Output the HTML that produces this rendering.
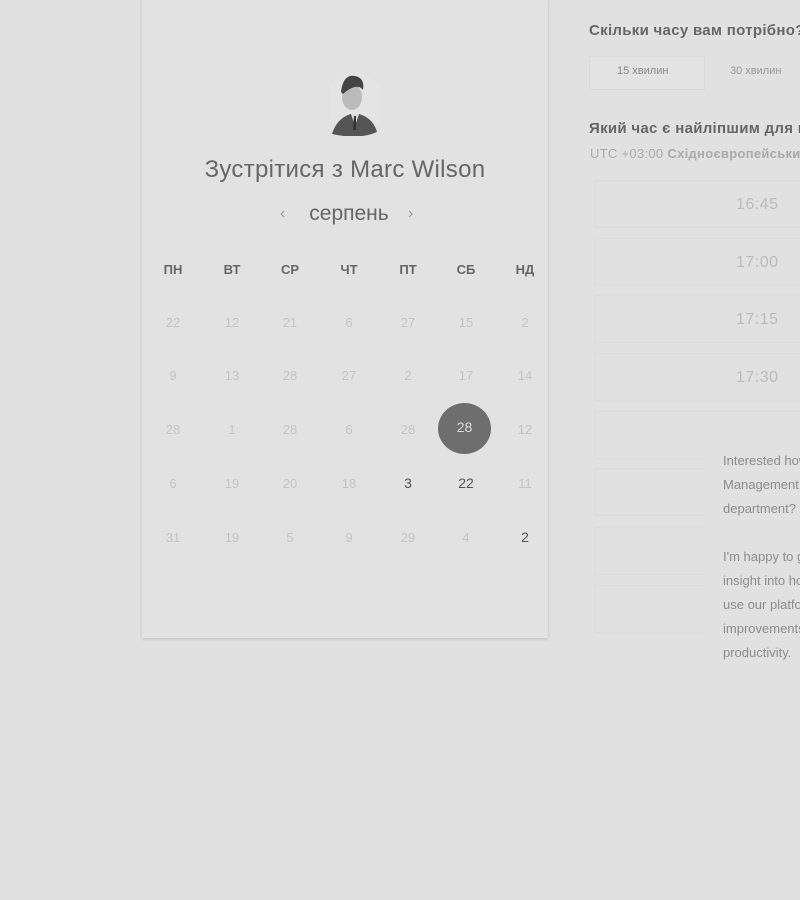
<!DOCTYPE html>
<html><head><meta charset="utf-8"><style>
html,body{margin:0;padding:0}
body{width:800px;height:900px;background:#e1e1e1;font-family:"Liberation Sans",sans-serif;overflow:hidden}
#w{position:relative;width:800px;height:900px;overflow:hidden}
.card{position:absolute;left:142px;top:-2px;width:406px;height:640px;background:#e2e2e2;box-shadow:0 1px 3px rgba(0,0,0,.15)}
.abs{position:absolute}
.c{position:absolute;width:50px;margin-left:-25px;text-align:center;font-size:13px;color:#c4c4c4}
.h{font-size:13px;font-weight:bold;color:#666}
.d{color:#555;font-size:14px}
.slot{position:absolute;left:594px;width:206px;height:48px;border:1px solid #dcdcdc;border-right:none;border-radius:3px 0 0 3px;background:#e1e1e1;box-sizing:border-box}
.slot span{position:absolute;left:141px;top:15px;font-size:16px;color:#bbb;letter-spacing:.5px}
.pop{position:absolute;left:705px;top:446px;width:95px;height:220px;background:#e1e1e1;overflow:hidden}
.pop p{margin:0;font-size:13px;line-height:24px;color:#8c8c8c;position:absolute;left:18px;white-space:nowrap}
</style></head><body><div id="w">
<div class="card"></div>
<div class="abs" style="left:329px;top:70px;width:52px;height:66px;">
<svg width="52" height="66" viewBox="0 0 52 66">
<circle cx="26" cy="34" r="31" fill="#e4e4e4"/>
<path d="M3 64 Q8 48 22 44 L30 44 Q44 48 48 62 Q30 70 3 64Z" fill="#555"/>
<path d="M22 44 L26 56 L30 44Z" fill="#ddd"/>
<path d="M25 46 L24 60 L27 60 L27 46Z" fill="#333"/>
<ellipse cx="23" cy="27" rx="10" ry="13" fill="#bbb"/>
<path d="M12 22 Q14 4 26 6 Q36 8 34 20 Q28 12 14 24Z" fill="#444"/>
</svg></div>
<div class="abs" style="left:142px;width:406px;top:156px;text-align:center;font-size:24px;color:#666;letter-spacing:.3px">Зустрітися з Marc Wilson</div>
<div class="abs" style="left:142px;width:414px;top:202px;text-align:center;font-size:21px;color:#666">серпень</div>
<div class="abs" style="left:280px;top:205px;font-size:16px;color:#999">‹</div>
<div class="abs" style="left:408px;top:205px;font-size:16px;color:#999">›</div>
<div class="c h" style="left:173px;top:262px">ПН</div><div class="c h" style="left:232px;top:262px">ВТ</div><div class="c h" style="left:290px;top:262px">СР</div><div class="c h" style="left:349px;top:262px">ЧТ</div><div class="c h" style="left:408px;top:262px">ПТ</div><div class="c h" style="left:466px;top:262px">СБ</div><div class="c h" style="left:525px;top:262px">НД</div>
<div class="c" style="left:173px;top:315px">22</div><div class="c" style="left:232px;top:315px">12</div><div class="c" style="left:290px;top:315px">21</div><div class="c" style="left:349px;top:315px">6</div><div class="c" style="left:408px;top:315px">27</div><div class="c" style="left:466px;top:315px">15</div><div class="c" style="left:525px;top:315px">2</div>
<div class="c" style="left:173px;top:368px">9</div><div class="c" style="left:232px;top:368px">13</div><div class="c" style="left:290px;top:368px">28</div><div class="c" style="left:349px;top:368px">27</div><div class="c" style="left:408px;top:368px">2</div><div class="c" style="left:466px;top:368px">17</div><div class="c" style="left:525px;top:368px">14</div>
<div class="c" style="left:173px;top:422px">28</div><div class="c" style="left:232px;top:422px">1</div><div class="c" style="left:290px;top:422px">28</div><div class="c" style="left:349px;top:422px">6</div><div class="c" style="left:408px;top:422px">28</div>
<div class="abs" style="left:438px;top:403px;width:53px;height:51px;border-radius:50%;background:#6e6e6e;color:#ddd;font-size:14px;text-align:center;line-height:49px">28</div>
<div class="c" style="left:525px;top:422px">12</div>
<div class="c" style="left:173px;top:476px">6</div><div class="c" style="left:232px;top:476px">19</div><div class="c" style="left:290px;top:476px">20</div><div class="c" style="left:349px;top:476px">18</div><div class="c d" style="left:408px;top:475px">3</div><div class="c d" style="left:466px;top:475px">22</div><div class="c" style="left:525px;top:476px">11</div>
<div class="c" style="left:173px;top:530px">31</div><div class="c" style="left:232px;top:530px">19</div><div class="c" style="left:290px;top:530px">5</div><div class="c" style="left:349px;top:530px">9</div><div class="c" style="left:408px;top:530px">29</div><div class="c" style="left:466px;top:530px">4</div><div class="c d" style="left:525px;top:529px">2</div>
<div class="abs" style="left:589px;top:22px;width:211px;overflow:hidden;font-size:15px;font-weight:bold;color:#666;white-space:nowrap;letter-spacing:.3px">Скільки часу вам потрібно?</div>
<div class="abs" style="left:589px;top:56px;width:114px;height:32px;border:1px solid #dadada;background:#e3e3e3"></div>
<div class="abs" style="left:617px;top:65px;font-size:11px;color:#888">15 хвилин</div>
<div class="abs" style="left:730px;top:65px;font-size:11px;color:#999">30 хвилин</div>
<div class="abs" style="left:589px;top:120px;width:211px;overflow:hidden;font-size:15px;font-weight:bold;color:#666;white-space:nowrap;letter-spacing:.3px">Який час є найліпшим для вас?</div>
<div class="abs" style="left:590px;top:146px;width:210px;overflow:hidden;font-size:13px;color:#aaa;white-space:nowrap;letter-spacing:.3px">UTC +03:00 <b>Східноєвропейський час</b></div>
<div class="slot" style="top:180px"><span>16:45</span></div>
<div class="slot" style="top:238px"><span>17:00</span></div>
<div class="slot" style="top:295px"><span>17:15</span></div>
<div class="slot" style="top:353px"><span>17:30</span></div>
<div class="slot" style="top:411px"></div>
<div class="slot" style="top:468px"></div>
<div class="slot" style="top:527px"></div>
<div class="slot" style="top:585px"></div>
<div class="pop">
<p style="top:3px">Interested how Time</p><p style="top:27px">Management could help your</p><p style="top:51px">department?</p>
<p style="top:99px">I'm happy to give you an</p><p style="top:123px">insight into how you can</p><p style="top:147px">use our platform for</p><p style="top:171px">improvements in team</p><p style="top:195px">productivity.</p>
</div>
</div></body></html>
